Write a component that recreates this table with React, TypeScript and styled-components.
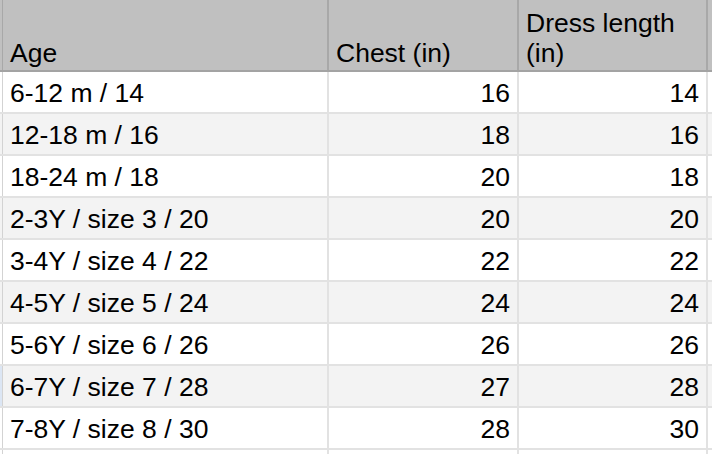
import React from "react";
import styled, { createGlobalStyle } from "styled-components";

const Global = createGlobalStyle`
  html, body { margin: 0; padding: 0; background: #ffffff; }
  body { font-family: "Liberation Sans", Arial, Helvetica, sans-serif; color: #000; }
`;

const Sheet = styled.div`
  width: 712px;
  height: 454px;
  overflow: hidden;
  display: flex;
  flex-direction: column;
  font-size: 26.5px;
`;

const Row = styled.div<{ $header?: boolean; $striped?: boolean }>`
  display: grid;
  grid-template-columns: 3px 326px 190px 189px 1fr;
  height: ${(p) => (p.$header ? "72px" : "42px")};
  flex: none;
  background: ${(p) => (p.$header ? "#c0c0c0" : p.$striped ? "#f3f3f3" : "#ffffff")};
  border-bottom: 2px solid ${(p) => (p.$header ? "#a3a3a3" : "#e2e2e2")};
  box-sizing: border-box;
`;

const Gutter = styled.div<{ $header?: boolean; $selected?: boolean }>`
  box-sizing: border-box;
  border-right: 1px solid ${(p) => (p.$header ? "#a8a8a8" : "#d3d3d3")};
  background: ${(p) => (p.$selected ? "#dce6f4" : "transparent")};
`;

const Cell = styled.div<{ $header?: boolean; $align?: "left" | "right" }>`
  box-sizing: border-box;
  border-right: 2px solid ${(p) => (p.$header ? "#a8a8a8" : "#e2e2e2")};
  padding: ${(p) => (p.$header ? "0 7px 2px 7px" : "2px 7px 0 7px")};
  display: flex;
  flex-direction: column;
  justify-content: ${(p) => (p.$header ? "flex-end" : "center")};
  text-align: ${(p) => (p.$align === "right" ? "right" : "left")};
  line-height: ${(p) => (p.$header ? "30px" : "normal")};
  white-space: ${(p) => (p.$header ? "normal" : "nowrap")};
  overflow: hidden;
`;

const Filler = styled.div``;

const rows: [string, number, number][] = [
  ["6-12 m / 14", 16, 14],
  ["12-18 m / 16", 18, 16],
  ["18-24 m / 18", 20, 18],
  ["2-3Y / size 3 / 20", 20, 20],
  ["3-4Y / size 4 / 22", 22, 22],
  ["4-5Y / size 5 / 24", 24, 24],
  ["5-6Y / size 6 / 26", 26, 26],
  ["6-7Y / size 7 / 28", 27, 28],
  ["7-8Y / size 8 / 30", 28, 30],
];

export default function App() {
  return (
    <>
      <Global />
      <Sheet>
        <Row $header>
          <Gutter $header />
          <Cell $header>Age</Cell>
          <Cell $header>Chest (in)</Cell>
          <Cell $header>Dress length (in)</Cell>
          <Filler />
        </Row>
        {rows.map(([age, chest, len], i) => (
          <Row key={age} $striped={i % 2 === 1}>
            <Gutter $selected={i === 7} />
            <Cell>{age}</Cell>
            <Cell $align="right">{chest}</Cell>
            <Cell $align="right">{len}</Cell>
            <Filler />
          </Row>
        ))}
        <Row>
          <Gutter />
          <Cell />
          <Cell />
          <Cell />
          <Filler />
        </Row>
      </Sheet>
    </>
  );
}
